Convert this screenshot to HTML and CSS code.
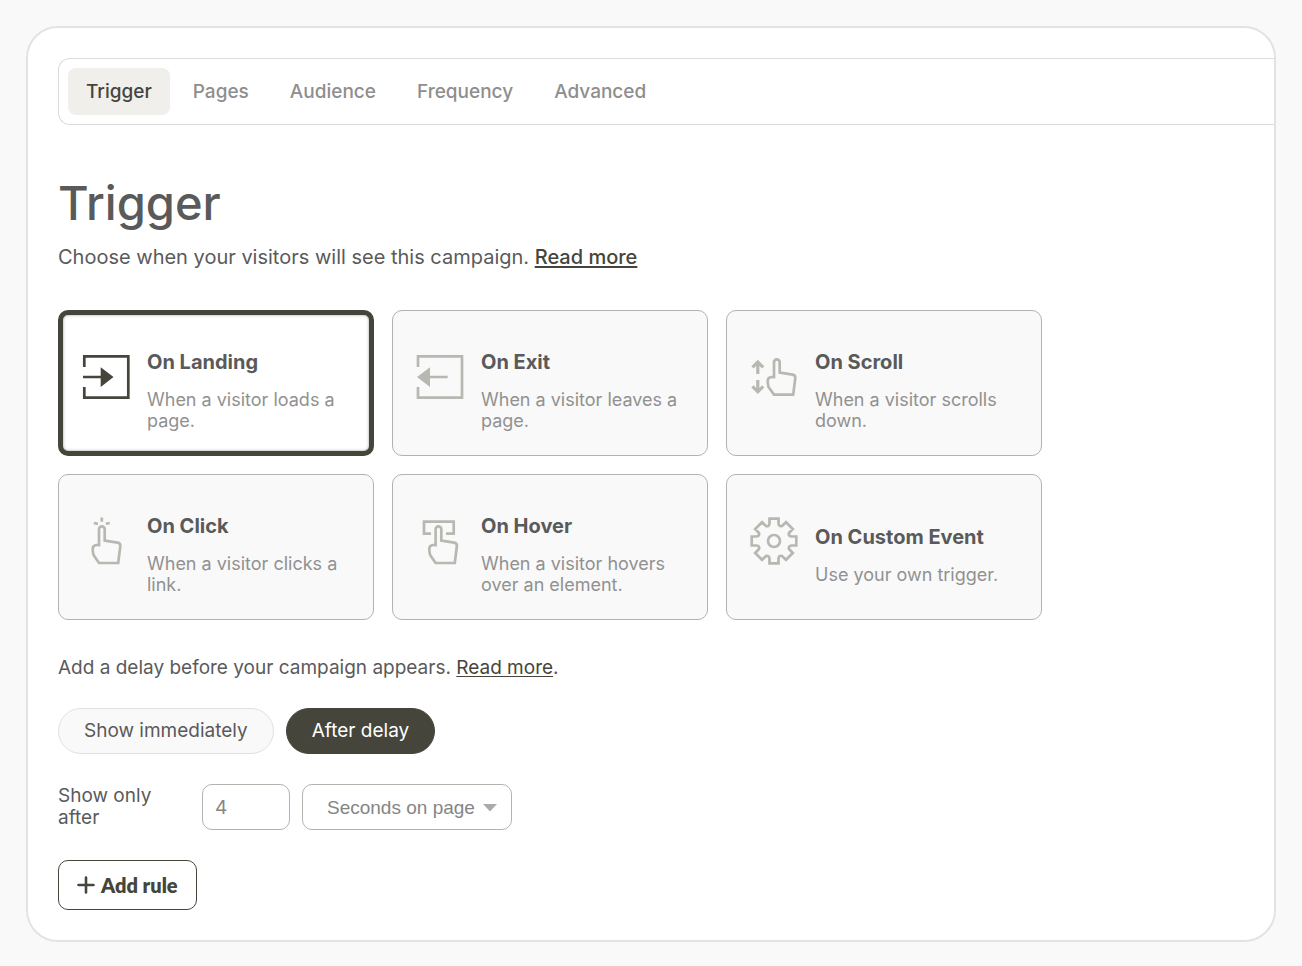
FILE: index.html
```html
<!DOCTYPE html>
<html lang="en">
<head>
  <meta charset="utf-8">
  <meta name="viewport" content="width=device-width, initial-scale=1">
  <title>Campaign Trigger</title>
  <link rel="stylesheet" href="styles.css">
</head>
<body>
  <main class="panel">
    <nav class="tabs">
      <a href="#trigger" class="tab active">Trigger</a>
      <a href="#pages" class="tab">Pages</a>
      <a href="#audience" class="tab">Audience</a>
      <a href="#frequency" class="tab">Frequency</a>
      <a href="#advanced" class="tab">Advanced</a>
    </nav>

    <h1>Trigger</h1>
    <p class="intro">Choose when your visitors will see this campaign. <a href="#triggers-help">Read more</a></p>

    <div class="cards">
      <button type="button" class="card selected">
        <svg class="icon" viewBox="0 0 48 48">
          <path d="M2.3 14V3.4H46.3V44.6H2.3V34M1 24H20"/>
          <path class="solid" d="M18.7 14.2L31.5 24L18.7 34Z"/>
        </svg>
        <span class="card-text">
          <span class="card-title">On Landing</span>
          <span class="card-desc">When a visitor loads a page.</span>
        </span>
      </button>
      <button type="button" class="card">
        <svg class="icon" viewBox="0 0 48 48">
          <path d="M2 14V3.4H46V44.6H2V34M13 24H31.7"/>
          <path class="solid" d="M14 14.2L1 24L14 34Z"/>
        </svg>
        <span class="card-text">
          <span class="card-title">On Exit</span>
          <span class="card-desc">When a visitor leaves a page.</span>
        </span>
      </button>
      <button type="button" class="card">
        <svg class="icon" viewBox="0 0 48 48">
          <path stroke-width="3.2" d="M7.8 21V9.5M2.4 14.4L7.8 9L13.2 14.4M7.8 27V38.5M2.4 33.4L7.8 38.8L13.2 33.4"/>
          <path d="M24 25.4V9.2a2.85 2.85 0 0 1 5.7 0V19.6L42.6 21.6Q45.6 22.2 45.3 25L43.2 41.6H24L18.5 34Q17.7 31 17.7 27.5Q18 24.2 21.5 24H24"/>
        </svg>
        <span class="card-text">
          <span class="card-title">On Scroll</span>
          <span class="card-desc">When a visitor scrolls down.</span>
        </span>
      </button>
      <button type="button" class="card">
        <svg class="icon" viewBox="0 0 48 48">
          <path d="M19.8 0.5V4.8M11.8 6L16 6.8M27.8 6L23.8 6.8"/>
          <path transform="translate(-7 4)" d="M24 25.4V8.2a2.85 2.85 0 0 1 5.7 0V19.6L42.6 21.6Q45.6 22.2 45.3 25L43.2 42H24L18.5 34Q17.7 31 17.7 27.5Q18 24.2 21.5 24H24"/>
        </svg>
        <span class="card-text">
          <span class="card-title">On Click</span>
          <span class="card-desc">When a visitor clicks a link.</span>
        </span>
      </button>
      <button type="button" class="card">
        <svg class="icon" viewBox="0 0 48 48">
          <path d="M15 16.7H8V4.7H37.7V16.7H30"/>
          <path transform="translate(-4.4 4)" d="M24 25.4V8.2a2.85 2.85 0 0 1 5.7 0V19.6L42.6 21.6Q45.6 22.2 45.3 25L43.2 42H24L18.5 34Q17.7 31 17.7 27.5Q18 24.2 21.5 24H24"/>
        </svg>
        <span class="card-text">
          <span class="card-title">On Hover</span>
          <span class="card-desc">When a visitor hovers over an element.</span>
        </span>
      </button>
      <button type="button" class="card">
        <svg class="icon" viewBox="0 0 48 48">
          <path d="M19.5 1.7H28.5V6.5Q29 9.8 32 9L36 5.2L42.8 12L39 16Q38 19 41.5 19.5H46.3V28.5H41.5Q38.2 29 39 32L42.8 36L36 42.8L32 39Q29 38 28.5 41.5V46.3H19.5V41.5Q19 38.2 16 39L12 42.8L5.2 36L9 32Q10 29 6.5 28.5H1.7V19.5H6.5Q9.8 19 9 16L5.2 12L12 5.2L16 9Q19 10 19.5 6.5Z"/>
          <circle cx="24" cy="24" r="6"/>
        </svg>
        <span class="card-text">
          <span class="card-title">On Custom Event</span>
          <span class="card-desc">Use your own trigger.</span>
        </span>
      </button>
    </div>

    <p class="delay-text">Add a delay before your campaign appears. <a href="#delay-help">Read more</a>.</p>

    <div class="pills">
      <button type="button" class="pill">Show immediately</button>
      <button type="button" class="pill on">After delay</button>
    </div>

    <div class="rule">
      <label for="delayValue">Show only after</label>
      <input id="delayValue" class="field" type="text" inputmode="numeric" value="4">
      <div class="select-wrap">
        <select id="delayUnit" class="field" aria-label="Delay unit">
          <option>Seconds on page</option>
        </select>
        <svg class="caret" viewBox="0 0 14 8"><path d="M0 0H14L7 7.5Z"/></svg>
      </div>
    </div>

    <button type="button" class="add-btn">
      <svg class="plus" viewBox="0 0 18 18"><path d="M9 1.5V16.5M1.5 9H16.5"/></svg>
      Add rule
    </button>
  </main>
</body>
</html>
```

FILE: styles.css
```css
* {
  box-sizing: border-box;
}
body {
  margin: 0;
  padding: 26px;
  background: #f9f9f9;
  font-family: Inter, "Liberation Sans", sans-serif;
  font-size: 19px;
  line-height: 22px;
  color: #5a5a5a;
}
button, input {
  font: inherit;
  color: inherit;
}
button {
  cursor: pointer;
}
.panel {
  background: #fff;
  border: 2px solid #e3e3e3;
  border-radius: 32px;
  padding: 30px;
  overflow: hidden;
}
/* tab bar runs off the right edge of the panel */
.tabs {
  display: flex;
  gap: 5px;
  margin-right: -30px;
  padding: 9px;
  border: 1px solid #dcdcdc;
  border-right: none;
  border-radius: 12px 0 0 12px;
}
.tab {
  padding: 12px 18px;
  line-height: 23px;
  border-radius: 8px;
  font-weight: 500;
  color: #8e8e8e;
  text-decoration: none;
}
.tab.active {
  background: #f0efeb;
  color: #45453c;
}
h1 {
  margin: 48px 0 0;
  font-size: 47px;
  line-height: 60px;
  font-weight: 500;
}
.intro {
  margin: 12px 0 0;
  font-size: 20px;
  line-height: 24px;
}
.intro a, .delay-text a {
  color: #45453c;
  text-underline-offset: 2px;
}
.intro a {
  font-weight: 500;
}
.cards {
  display: grid;
  grid-template-columns: repeat(3, 1fr);
  gap: 18px;
  max-width: 984px;
  margin-top: 41px;
}
.card {
  display: flex;
  align-items: center;
  gap: 17px;
  min-height: 146px;
  padding: 0 23px;
  background: #f9f9f9;
  border: 1px solid #b3b3ad;
  border-radius: 10px;
  text-align: left;
}
.card.selected {
  padding: 0 19px;
  background: #fff;
  border: 5px solid #45453c;
  box-shadow: inset 0 0 3px rgba(0, 0, 0, 0.4);
}
.icon {
  flex: none;
  width: 48px;
  height: 48px;
  margin-bottom: 12px;
  fill: none;
  stroke: #b8b8b2;
  stroke-width: 2.7;
}
.icon .solid {
  fill: #b8b8b2;
  stroke: none;
}
.selected .icon {
  stroke: #45453c;
}
.selected .icon .solid {
  fill: #45453c;
}
.card-text {
  display: flex;
  flex-direction: column;
  gap: 15px;
  padding-top: 15px;
}
.card-title {
  font-size: 20px;
  line-height: 24px;
  font-weight: 700;
}
.card-desc {
  font-size: 18px;
  line-height: 21px;
  color: #919191;
}
.delay-text {
  margin: 37px 0 0;
}
.pills {
  display: flex;
  gap: 12px;
  margin-top: 29px;
}
.pill {
  height: 46px;
  padding: 0 25px;
  background: #f9f9f9;
  border: 1px solid #e0e0e0;
  border-radius: 23px;
}
.pill.on {
  background: #45453c;
  border-color: #45453c;
  color: #fff;
}
.rule {
  display: flex;
  align-items: center;
  gap: 12px;
  margin-top: 30px;
}
.rule label {
  width: 132px;
}
.field {
  height: 46px;
  background: #fff;
  border: 1px solid #b3b3ad;
  border-radius: 10px;
  color: #858585;
}
input.field {
  width: 88px;
  padding: 0 12px;
}
.select-wrap {
  display: grid;
  align-items: center;
}
.select-wrap > * {
  grid-area: 1 / 1;
}
select.field {
  width: 210px;
  padding: 0 24px;
  appearance: none;
  font-family: "Liberation Sans", Arial, sans-serif;
  font-size: 19px;
}
.caret {
  justify-self: end;
  width: 14px;
  height: 8px;
  margin: 2px 15px 0 0;
  fill: #aaa;
  pointer-events: none;
}
.add-btn {
  display: flex;
  align-items: center;
  gap: 6px;
  height: 50px;
  margin-top: 30px;
  padding: 0 18px;
  background: #fff;
  border: 1px solid #45453c;
  border-radius: 10px;
  font-family: Lato, sans-serif;
  font-size: 20px;
  font-weight: 800;
  color: #45453c;
}
.plus {
  width: 18px;
  height: 18px;
  fill: none;
  stroke: #45453c;
  stroke-width: 2.6;
  stroke-linecap: round;
}
```
